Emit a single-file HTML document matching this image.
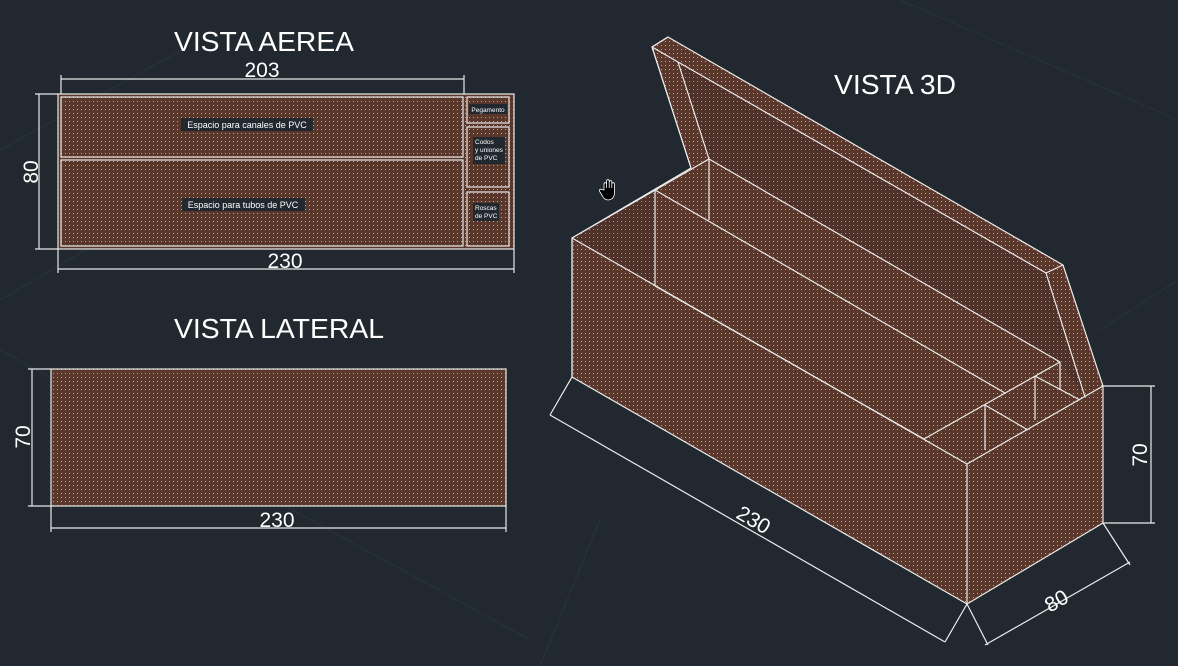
<!DOCTYPE html>
<html><head><meta charset="utf-8"><style>
html,body{margin:0;padding:0;background:#212830;}
svg{display:block}
text{font-family:"Liberation Sans",sans-serif;fill:#fff}
</style></head><body>
<svg width="1178" height="666" viewBox="0 0 1178 666" xmlns="http://www.w3.org/2000/svg">
<defs>
<pattern id="d" width="4" height="4" patternUnits="userSpaceOnUse">
<rect width="4" height="4" fill="#5a372b"/>
<rect x="1" y="1" width="1" height="1" fill="#b8a8a4"/>
</pattern>
<pattern id="d2" width="4" height="4" patternUnits="userSpaceOnUse">
<rect width="4" height="4" fill="#4e3128"/>
<rect x="1" y="1" width="1" height="1" fill="#a8958f"/>
</pattern>
</defs>
<rect width="1178" height="666" fill="#212830"/>
<g stroke="#2a323b" stroke-width="1">
<line x1="0" y1="150" x2="200" y2="40"/><line x1="0" y1="300" x2="120" y2="230"/>
<line x1="530" y1="640" x2="0" y2="350"/><line x1="1178" y1="120" x2="900" y2="0"/>
<line x1="1178" y1="280" x2="1100" y2="330"/><line x1="600" y1="520" x2="540" y2="666"/>
</g>

<!-- titles -->
<text x="264" y="51" font-size="28" text-anchor="middle" textLength="180" lengthAdjust="spacingAndGlyphs">VISTA AEREA</text>
<text x="279" y="338" font-size="28" text-anchor="middle" textLength="210" lengthAdjust="spacingAndGlyphs">VISTA LATERAL</text>
<text x="895" y="94" font-size="28" text-anchor="middle" textLength="122" lengthAdjust="spacingAndGlyphs">VISTA 3D</text>

<!-- top view -->
<g stroke="#e8e8e8" stroke-width="1.2">
<rect x="58" y="94" width="456" height="155" fill="url(#d)"/>
<rect x="61" y="97" width="402" height="60" fill="none"/>
<rect x="61" y="160" width="402" height="86" fill="none"/>
<rect x="467" y="97" width="42" height="26" fill="none"/>
<rect x="467" y="127" width="42" height="60" fill="none"/>
<rect x="467" y="192" width="42" height="54" fill="none"/>
<line x1="61" y1="79" x2="464" y2="79"/><line x1="61" y1="75" x2="61" y2="94"/><line x1="464" y1="75" x2="464" y2="94"/>
<line x1="39" y1="94" x2="39" y2="249"/><line x1="35" y1="94" x2="58" y2="94"/><line x1="35" y1="249" x2="58" y2="249"/>
<line x1="58" y1="269" x2="514" y2="269"/><line x1="58" y1="249" x2="58" y2="273"/><line x1="514" y1="249" x2="514" y2="273"/>
</g>
<text x="262" y="77" font-size="21" text-anchor="middle">203</text>
<text x="285" y="268" font-size="21" text-anchor="middle">230</text>
<text transform="translate(38,172) rotate(-90)" font-size="21" text-anchor="middle">80</text>
<rect x="181" y="118" width="132" height="13" fill="#212830"/>
<text x="247" y="128" font-size="9" text-anchor="middle">Espacio para canales de PVC</text>
<rect x="182" y="198" width="123" height="13" fill="#212830"/>
<text x="243" y="208" font-size="9" text-anchor="middle">Espacio para tubos de PVC</text>
<rect x="469" y="104" width="38" height="10" fill="#212830"/>
<text x="488" y="112" font-size="6.5" text-anchor="middle">Pegamento</text>
<rect x="473" y="137" width="32" height="27" fill="#212830"/>
<text x="475" y="144" font-size="6.5">Codos</text>
<text x="475" y="152" font-size="6.5">y uniones</text>
<text x="475" y="160" font-size="6.5">de PVC</text>
<rect x="473" y="203" width="26" height="18" fill="#212830"/>
<text x="475" y="210" font-size="6.5">Roscas</text>
<text x="475" y="218" font-size="6.5">de PVC</text>

<!-- lateral -->
<g stroke="#e8e8e8" stroke-width="1.2">
<rect x="51" y="369" width="455" height="137" fill="url(#d)"/>
<line x1="32" y1="369" x2="32" y2="506"/><line x1="28" y1="369" x2="51" y2="369"/><line x1="28" y1="506" x2="51" y2="506"/>
<line x1="51" y1="528" x2="506" y2="528"/><line x1="51" y1="506" x2="51" y2="532"/><line x1="506" y1="506" x2="506" y2="532"/>
</g>
<text x="277" y="527" font-size="21" text-anchor="middle">230</text>
<text transform="translate(30,437) rotate(-90)" font-size="21" text-anchor="middle">70</text>

<!-- 3D -->
<g stroke="#ececec" stroke-width="1.2" stroke-linejoin="round">
<polygon points="572,238 691,168 652,47 668,37 1063,265 1103,386 1103,523 967,604 572,377" fill="url(#d)"/>
<polygon points="678,62 709,159 1060,362 1085,397 1046,273" fill="url(#d2)" stroke="none"/>
<polygon points="572,238 655,190 655,286 924,439 967,464" fill="url(#d2)" stroke="none"/>
<polyline points="652,47 691,168" fill="none"/>
<line x1="668" y1="37" x2="652" y2="47"/>
<line x1="678" y1="62" x2="1046" y2="273"/>
<line x1="678" y1="62" x2="709" y2="159"/>
<line x1="652" y1="47" x2="678" y2="62"/>
<line x1="1063" y1="265" x2="1046" y2="273"/>
<line x1="1046" y1="273" x2="1085" y2="397"/>
<line x1="572" y1="238" x2="709" y2="159"/>
<line x1="709" y1="159" x2="709" y2="220"/>
<line x1="709" y1="159" x2="1060" y2="362"/>
<line x1="1060" y1="362" x2="1060" y2="390"/>
<line x1="655" y1="190" x2="655" y2="286"/>
<line x1="655" y1="190" x2="1005" y2="393"/>
<line x1="655" y1="286" x2="924" y2="439"/>
<line x1="572" y1="238" x2="967" y2="464"/>
<line x1="572" y1="238" x2="572" y2="377"/>
<line x1="967" y1="464" x2="967" y2="604"/>
<line x1="967" y1="464" x2="1103" y2="386"/>
<line x1="924" y1="439" x2="1060" y2="362"/>
<line x1="985" y1="405" x2="985" y2="450"/>
<line x1="1035" y1="376" x2="1035" y2="420"/>
<line x1="985" y1="405" x2="1028" y2="430"/>
<line x1="1035" y1="376" x2="1080" y2="400"/>
<line x1="572" y1="377" x2="550" y2="415"/>
<line x1="967" y1="604" x2="945" y2="642"/>
<line x1="550" y1="415" x2="945" y2="642"/>
<line x1="967" y1="604" x2="988" y2="645"/>
<line x1="1103" y1="523" x2="1130" y2="565"/>
<line x1="985" y1="645" x2="1130" y2="562"/>
<line x1="1103" y1="386" x2="1155" y2="386"/>
<line x1="1103" y1="523" x2="1155" y2="523"/>
<line x1="1151" y1="386" x2="1151" y2="523"/>
</g>
<text transform="translate(750,526) rotate(30)" font-size="21" text-anchor="middle">230</text>
<text transform="translate(1060,607) rotate(-30)" font-size="21" text-anchor="middle">80</text>
<text transform="translate(1147,455) rotate(-90)" font-size="21" text-anchor="middle">70</text>
<path d="M604,190 v-6 a1.3,1.3 0 0 1 2.6,0 v4 v-7 a1.3,1.3 0 0 1 2.6,0 v7 v-6 a1.3,1.3 0 0 1 2.6,0 v6 v-4 a1.3,1.3 0 0 1 2.6,0 v9 q0,6 -6,7 q-4,0 -6,-4 l-3,-5 a1.3,1.3 0 0 1 2,-1.5 z" fill="#000" stroke="#fff" stroke-width="0.8"/>
</svg>
</body></html>
